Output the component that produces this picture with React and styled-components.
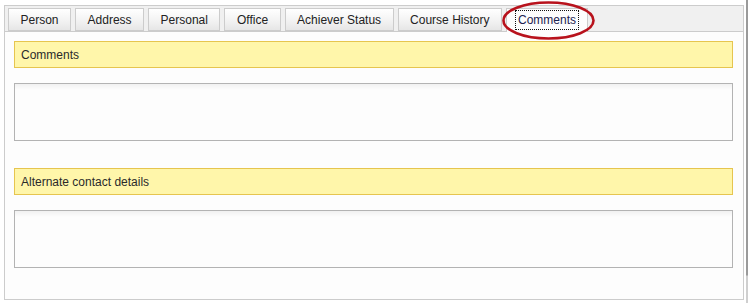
import React from 'react';
import styled, { createGlobalStyle } from 'styled-components';

const GlobalStyle = createGlobalStyle`
    html, body {
        margin: 0;
        padding: 0;
        background: #ffffff;
        font-family: "Liberation Sans", Arial, sans-serif;
    }
`;

const Page = styled.div`
    position: relative;
    width: 748px;
    height: 303px;
    display: flex;
    align-items: flex-start;
    padding: 5px 0 0 4px;
    box-sizing: border-box;
`;

const Panel = styled.div`
    width: 741px;
    height: 295px;
    box-sizing: border-box;
    border: 1px solid #cccccc;
    background: #fdfdfd;
    display: flex;
    flex-direction: column;
`;

const TabStrip = styled.div`
    height: 26px;
    box-sizing: border-box;
    background: #f0f0f0;
    border-bottom: 1px solid #cccccc;
    display: flex;
    align-items: flex-end;
    padding-left: 3px;
    gap: 4px;
`;

const Tab = styled.div`
    height: ${props => props.active ? '24px' : '23px'};
    margin-bottom: ${props => props.active ? '-1px' : '0'};
    box-sizing: border-box;
    padding: 0 ${props => props.active ? '8px' : '11.5px'};
    border: 1px solid #cccccc;
    border-bottom: ${props => props.active ? 'none' : '1px solid #cccccc'};
    background: ${props => props.active
        ? '#fdfdfd'
        : 'linear-gradient(to bottom, #ffffff 0%, #f4f4f4 50%, #e6e6e6 100%)'};
    color: ${props => props.active ? '#1c2250' : '#222222'};
    font-size: 12px;
    display: flex;
    align-items: center;
    padding-bottom: ${props => props.active ? '1px' : '0'};
`;

const Focus = styled.span`
    border: 1px dotted #111111;
    padding: 2px 2px;
    line-height: 14px;
`;

const Content = styled.div`
    flex: 1;
    padding: 9px 10px 0 9px;
    display: flex;
    flex-direction: column;
`;

const SectionHeader = styled.div`
    height: 27px;
    box-sizing: border-box;
    background: #fff6aa;
    border: 1px solid #e6c54f;
    font-size: 12px;
    color: #2a2a2a;
    display: flex;
    align-items: center;
    padding-left: 6px;
    margin-top: ${props => props.first ? '0' : '27px'};
`;

const TextBox = styled.div`
    height: 58px;
    box-sizing: border-box;
    margin-top: 15px;
    border: 1px solid #b3b3b3;
    background: linear-gradient(to bottom, #f1f1f1 0px, #fbfbfb 5px, #fdfdfd 6px);
`;

const ScrollEdge = styled.div`
    margin-left: 2px;
    margin-top: -5px;
    width: 2px;
    height: 303px;
    background: linear-gradient(to bottom, #9a9a9a 0px, #9a9a9a 275px, #cfcfcf 276px);
`;

const Annotation = styled.svg`
    position: absolute;
    left: 500px;
    top: 0;
    width: 100px;
    height: 42px;
    pointer-events: none;
`;

const tabs = ['Person', 'Address', 'Personal', 'Office', 'Achiever Status', 'Course History'];

function App() {
    return (
        <>
            <GlobalStyle />
            <Page>
                <Panel>
                    <TabStrip>
                        {tabs.map(t => <Tab key={t}>{t}</Tab>)}
                        <Tab active><Focus>Comments</Focus></Tab>
                    </TabStrip>
                    <Content>
                        <SectionHeader first>Comments</SectionHeader>
                        <TextBox />
                        <SectionHeader>Alternate contact details</SectionHeader>
                        <TextBox />
                    </Content>
                </Panel>
                <ScrollEdge />
                <Annotation viewBox="0 0 100 42">
                    <ellipse cx="48.5" cy="20.5" rx="45" ry="18" fill="none" stroke="#b8121c" strokeWidth="2.6" />
                </Annotation>
            </Page>
        </>
    );
}

export default App;
